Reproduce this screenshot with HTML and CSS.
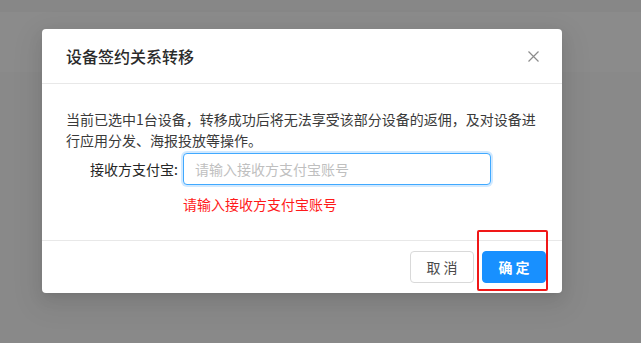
FILE: index.html
```html
<!DOCTYPE html>
<html lang="zh-CN">
<head>
<meta charset="utf-8">
<title>设备签约关系转移</title>
<link rel="stylesheet" href="styles.css">
</head>
<body>
<div class="page">
  <div class="page-top"></div>
  <div class="page-header"></div>
  <div class="page-rest"></div>
</div>
<div class="modal">
  <div class="modal-header">
    <div class="modal-title">设备签约关系转移</div>
    <button class="modal-close" aria-label="Close">
      <svg width="11" height="11" viewBox="0 0 11 11"><path d="M0.5 0.5 L10.5 10.5 M10.5 0.5 L0.5 10.5" stroke="#8c8c8c" stroke-width="1.2" fill="none"/></svg>
    </button>
  </div>
  <div class="modal-body">
    <p class="notice">当前已选中1台设备，转移成功后将无法享受该部分设备的返佣，及对设备进行应用分发、海报投放等操作。</p>
    <div class="form-row">
      <label class="form-label">接收方支付宝:</label>
      <div class="form-control">
        <input class="input" type="text" placeholder="请输入接收方支付宝账号">
        <div class="form-error">请输入接收方支付宝账号</div>
      </div>
    </div>
  </div>
  <div class="modal-footer">
    <button class="btn btn-default">取 消</button>
    <button class="btn btn-primary">确 定</button>
    <div class="highlight"></div>
  </div>
</div>
</body>
</html>
```
FILE: styles.css
```css
html, body {
  margin: 0;
  padding: 0;
}
body {
  width: 641px;
  height: 343px;
  overflow: hidden;
  background: #898989;
  font-family: "Noto Sans CJK SC", "Noto Sans", sans-serif;
  position: relative;
}
.page-top {
  height: 12px;
  background: #878787;
}
.page-header {
  height: 60px;
  background: #8b8b8b;
}
.modal {
  position: absolute;
  left: 42px;
  top: 29px;
  width: 520px;
  background: #fff;
  border-radius: 4px;
  box-shadow: 0 3px 6px -4px rgba(0,0,0,.12), 0 6px 16px 0 rgba(0,0,0,.08), 0 9px 28px 8px rgba(0,0,0,.05);
}
.modal-header {
  height: 54px;
  padding: 0 23px 0 24px;
  border-bottom: 1px solid #e8e8e8;
  display: flex;
  align-items: center;
  justify-content: space-between;
}
.modal-title {
  font-size: 16px;
  line-height: 22px;
  color: #2a2a2a;
  font-weight: 500;
}
.modal-close {
  border: 0;
  background: none;
  padding: 0;
  width: 11px;
  height: 11px;
  display: flex;
}
.modal-body {
  padding: 25px 24px 25px;
  font-size: 14px;
  color: #3a3a3a;
}
.notice {
  margin: 0;
  line-height: 20.5px;
}
.form-row {
  display: flex;
  margin-top: 3px;
}
.form-label {
  box-sizing: border-box;
  width: 117px;
  text-align: right;
  padding-right: 5px;
  height: 32px;
  line-height: 32px;
  color: #262626;
  font-size: 14px;
}
.form-control {
  display: flex;
  flex-direction: column;
}
.input {
  box-sizing: border-box;
  width: 308px;
  height: 32px;
  border: 1px solid #40a9ff;
  border-radius: 4px;
  box-shadow: 0 0 0 2px rgba(24,144,255,.2);
  padding: 0 11px;
  font-family: inherit;
  font-size: 14px;
  color: #262626;
  outline: none;
}
.input::placeholder {
  color: #bfbfbf;
}
.form-error {
  margin-top: 8px;
  line-height: 22px;
  font-size: 14px;
  color: #ff1a1a;
}
.modal-footer {
  border-top: 1px solid #e8e8e8;
  padding: 10px 16px;
  display: flex;
  justify-content: flex-end;
  gap: 8px;
  position: relative;
}
.btn {
  width: 64px;
  height: 32px;
  border-radius: 4px;
  font-family: inherit;
  font-size: 14px;
  padding: 0;
  cursor: pointer;
}
.btn-default {
  background: #fff;
  border: 1px solid #d9d9d9;
  color: #4a4a4a;
}
.btn-primary {
  background: #1890ff;
  border: 1px solid #1890ff;
  color: #fff;
  font-weight: 600;
}
.highlight {
  position: absolute;
  left: 435px;
  top: -11px;
  width: 67px;
  height: 57px;
  border: 2px solid #f01818;
  border-radius: 2px;
}
```
